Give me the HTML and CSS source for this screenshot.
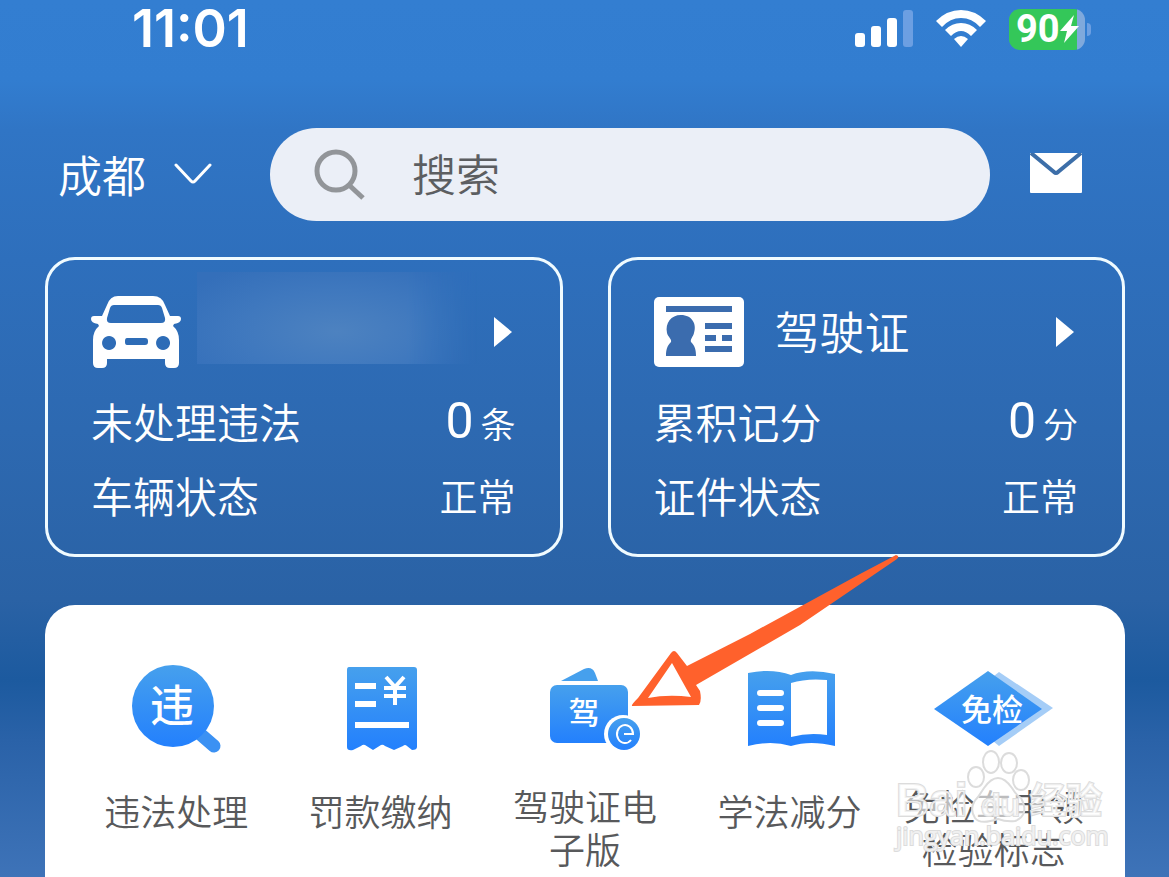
FILE: index.html
```html
<!DOCTYPE html>
<html lang="zh-CN">
<head>
<meta charset="utf-8">
<meta name="viewport" content="width=device-width, initial-scale=1">
<title>交管</title>
<link rel="stylesheet" href="styles.css">
</head>
<body>
<div class="page">
  <div class="status-bar">
    <time class="clock">11:01</time>
    <div class="status-icons">
      <svg class="signal" width="58" height="38" viewBox="0 0 58 38" aria-hidden="true">
        <g fill="#fff"><rect x="0" y="23" width="10" height="14" rx="3"/><rect x="16" y="16" width="10" height="21" rx="3"/><rect x="32" y="8" width="10" height="29" rx="3"/></g>
        <rect x="48" y="0" width="10" height="37" rx="3" fill="#6c9fe2"/>
      </svg>
      <svg class="wifi" width="50" height="38" viewBox="0 0 50 38" aria-hidden="true">
        <path fill="#fff" d="M0 11Q11 0 25 0T50 11L44 17Q36 8 25 8T6 17ZM9 20Q16 13 25 13T41 20L35 26Q30 21 25 21T15 26ZM18 29Q25 23 32 29L25 37Z"/>
      </svg>
      <div class="battery">
        <span class="battery-level">90</span>
        <svg width="19" height="28" viewBox="0 0 19 28" aria-hidden="true"><path fill="#fff" d="M14 0 0 16H7L4 28 19 11H11Z"/></svg>
      </div>
    </div>
  </div>

  <header class="header">
    <button class="city" type="button">成都
      <svg width="38" height="22" viewBox="0 0 38 22" aria-hidden="true"><path d="M2 2 17 18Q19 20 21 18L36 2" fill="none" stroke="#fff" stroke-width="3" stroke-linecap="round"/></svg>
    </button>
    <label class="search">
      <svg width="52" height="52" viewBox="0 0 52 52" aria-hidden="true"><g fill="none" stroke="#929599" stroke-width="5"><circle cx="22" cy="22" r="19"/><path d="M35 36 49 49"/></g></svg>
      <input type="search" placeholder="搜索" aria-label="搜索">
    </label>
    <button class="mail" type="button" aria-label="消息">
      <svg width="52" height="40" viewBox="0 0 52 40" aria-hidden="true"><rect width="52" height="40" rx="1" fill="#fff"/><path d="M1 0 24 19Q26 21 28 19L51 0" fill="none" stroke="#3c6ea8" stroke-width="4"/></svg>
    </button>
  </header>

  <section class="cards">
    <a class="card" href="#vehicle">
      <span class="card-head">
        <svg class="card-icon" width="90" height="72" viewBox="0 0 90 72" aria-hidden="true">
          <path fill="#fff" fill-rule="evenodd" d="M27 0H62Q71 0 74 9L79 20H87Q90 20 90 23 90 27 83 28L82 30Q88 35 88 44V67Q88 72 83 72H79Q74 72 74 67V63H16V67Q16 72 11 72H7Q2 72 2 67V44Q2 35 8 30L7 28Q0 27 0 23 0 20 3 20H11L16 9Q19 0 27 0ZM23 9Q20 9 19 12L16 22Q15 27 20 27H70Q75 27 74 22L71 12Q70 9 67 9ZM18 40a7 7 0 1 0 .1 0ZM72 40a7 7 0 1 0 .1 0ZM36 42Q34 42 34 45V46Q34 49 36 49H54Q57 49 57 46V45Q57 42 54 42Z"/>
        </svg>
        <span class="plate" aria-label="车牌号"></span>
        <svg class="go" width="18" height="30" viewBox="0 0 18 30" aria-hidden="true"><path d="M0 0 18 15 0 30Z" fill="#fff"/></svg>
      </span>
      <span class="row"><span>未处理违法</span><span class="count"><b>0</b>条</span></span>
      <span class="row"><span>车辆状态</span><span class="state">正常</span></span>
    </a>
    <a class="card" href="#license">
      <span class="card-head">
        <svg class="card-icon" width="90" height="70" viewBox="0 0 90 70" aria-hidden="true">
          <rect width="90" height="70" rx="5" fill="#fff"/>
          <g fill="#3b6cae"><path d="M12 9H78V15H12ZM51 26H78V32H51ZM51 38H62V44H51ZM68 38H78V44H68ZM51 49H78V55H51Z"/><path d="M27 18C38 18 43 27 40 36 39 40 36 42 37 45 41 49 42 53 42 59H12C12 53 13 49 17 45 18 42 14 40 13 36 11 26 17 18 27 18Z"/></g>
        </svg>
        <span class="card-title">驾驶证</span>
        <svg class="go" width="18" height="30" viewBox="0 0 18 30" aria-hidden="true"><path d="M0 0 18 15 0 30Z" fill="#fff"/></svg>
      </span>
      <span class="row"><span>累积记分</span><span class="count"><b>0</b>分</span></span>
      <span class="row"><span>证件状态</span><span class="state">正常</span></span>
    </a>
  </section>

  <main class="panel">
    <nav class="services">
      <a class="service" href="#violation">
        <svg width="120" height="96" viewBox="0 0 120 96" aria-hidden="true">
          <defs><linearGradient id="blue" x1="0" y1="0" x2="0" y2="1"><stop offset="0" stop-color="#46a0ed"/><stop offset="1" stop-color="#2380fd"/></linearGradient></defs>
          <path d="M83 73 98 86" stroke="#3b91f3" stroke-width="13" stroke-linecap="round"/>
          <circle cx="57" cy="46" r="41" fill="url(#blue)"/>
          <text x="56" y="62" class="glyph glyph-large">违</text>
        </svg>
        <span class="label">违法处理</span>
      </a>
      <a class="service" href="#fine">
        <svg width="120" height="96" viewBox="0 0 120 96" aria-hidden="true">
          <path fill="url(#blue)" d="M28 7H93Q96 7 96 10V87Q96 90 91 90L86 86Q84 84 82 86L73 90 64 86Q62 84 60 85L52 90 44 85Q42 84 40 86L32 90Q26 91 26 87V10Q26 7 28 7Z"/>
          <path fill="#fff" d="M34 23H55V29H34ZM34 41H55V47H34ZM34 62H88V68H34Z"/>
          <path fill="none" stroke="#fff" stroke-width="4" d="M65 17 74 27 83 17M63 28H85M63 36H85M74 26V45"/>
        </svg>
        <span class="label">罚款缴纳</span>
      </a>
      <a class="service" href="#elicense">
        <svg width="120" height="96" viewBox="0 0 120 96" aria-hidden="true">
          <path fill="#46a0ed" d="M36 21 59 9Q67 6 70 13L73 21Z"/>
          <rect x="25" y="25" width="78" height="58" rx="7" fill="url(#blue)"/>
          <text x="59" y="64" class="glyph">驾</text>
          <circle cx="98" cy="74" r="19" fill="#fff"/><circle cx="99" cy="74" r="16" fill="url(#blue)"/>
          <path d="M99 74H108A8 9 0 1 0 106 80" fill="none" stroke="#fff" stroke-width="2"/>
        </svg>
        <span class="label label-double">驾驶证电<br>子版</span>
      </a>
      <a class="service" href="#study">
        <svg width="120" height="96" viewBox="0 0 120 96" aria-hidden="true">
          <path fill="url(#blue)" fill-rule="evenodd" d="M19 13Q43 8 62 15 80 8 106 14V86Q81 80 62 86 42 80 19 86ZM62 23V77Q80 72 98 75V20Q78 18 62 23Z"/>
          <path d="M31 33H52M31 48H52M31 63H52" stroke="#fff" stroke-width="6" stroke-linecap="round"/>
        </svg>
        <span class="label">学法减分</span>
      </a>
      <a class="service" href="#exempt">
        <svg width="120" height="96" viewBox="0 0 120 96" aria-hidden="true">
          <path fill="#a5cdf7" d="M65 12 119 48 65 86 19 48Z"/>
          <path fill="url(#blue)" d="M54 11 108 49 54 86 0 49Z"/>
          <text x="58" y="61" class="glyph">免检</text>
        </svg>
        <span class="label label-double">免检车申领<br>检验标志</span>
      </a>
    </nav>

    <svg class="pointer" width="270" height="156" viewBox="0 0 270 156" aria-hidden="true">
      <path fill="#ff612c" fill-rule="evenodd" d="M266 4Q270 5 267 8L170 74 66 134 70 140Q72 150 69 154L2 155Q1 154 8 147L41 102Q44 98 47 102L57 115 120 83 230 23ZM42 112 18 147Q38 143 61 146Z"/>
    </svg>

    <svg class="watermark" width="216" height="106" viewBox="0 0 216 106" aria-hidden="true">
      <g class="mark">
        <text x="4" y="68" class="mark-big">Bai</text>
        <text x="138" y="66" class="mark-cjk">经验</text>
        <text x="4" y="97" class="mark-url">jingyan.baidu.com</text>
        <g fill="#fff" fill-opacity=".6"><ellipse cx="99" cy="14" rx="8" ry="11"/><ellipse cx="117" cy="15" rx="8" ry="10"/><ellipse cx="84" cy="29" rx="8" ry="10"/><ellipse cx="129" cy="32" rx="8" ry="10"/><path d="M92 40Q106 20 120 40 124 47 129 50 138 67 123 73 114 74 106 71 88 77 83 70 76 59 86 49Z"/></g>
        <text x="89" y="68" class="mark-mid">du</text>
      </g>
    </svg>
  </main>
</div>
</body>
</html>
```
FILE: styles.css
```css
* { box-sizing: border-box; }

body {
  margin: 0;
  font-family: "Noto Sans CJK SC", sans-serif;
  font-weight: 350;
  color: #fff;
}

button, input {
  font: inherit;
  color: inherit;
  border: 0;
  padding: 0;
  background: none;
}

a { color: inherit; text-decoration: none; }
svg { display: block; flex: none; }

.page {
  min-height: 100vh;
  display: flex;
  flex-direction: column;
  padding: 0 44px 0 45px;
  background: linear-gradient(#337ed1 0, #327dd0 80px, #3075c5 130px, #2e6fbc 260px, #2d69b1 430px, #2a62a5 600px, #1c5a9f 680px, #2a62a8 740px, #3e73b8 877px);
}

.status-bar {
  display: flex;
  justify-content: space-between;
  align-items: center;
  height: 58px;
  padding: 0 40px 0 87px;
}

.clock { font: 600 52px/58px Inter, sans-serif; }
.status-icons { display: flex; align-items: center; gap: 23px; }

.battery {
  position: relative;
  display: flex;
  align-items: center;
  width: 76px;
  height: 41px;
  padding-left: 7px;
  border-radius: 11px;
  background: linear-gradient(90deg, #34c759 68px, #7fa9dc 68px);
}

.battery::after {
  content: "";
  position: absolute;
  left: 78px;
  top: 14px;
  width: 4px;
  height: 13px;
  border-radius: 0 4px 4px 0;
  background: #6c9fe2;
}

.battery-level { font: 700 38px/41px Roboto, sans-serif; }

.header {
  display: flex;
  align-items: center;
  height: 93px;
  margin-top: 70px;
  padding: 0 43px 0 13px;
}

.city {
  display: flex;
  align-items: center;
  gap: 28px;
  width: 212px;
  padding-bottom: 2px;
  font-size: 44px;
  line-height: 64px;
}

.search {
  flex: 1;
  display: flex;
  align-items: center;
  gap: 46px;
  height: 93px;
  padding: 0 44px;
  border-radius: 47px;
  background: #ebeff7;
}

.search input {
  flex: 1;
  min-width: 0;
  padding-bottom: 4px;
  font-size: 44px;
  line-height: 64px;
  color: #5c5e61;
  outline: 0;
}

.search input::placeholder { color: #5c5e61; opacity: 1; }
.mail { margin-left: 40px; padding-bottom: 4px; }

.cards {
  display: grid;
  grid-template-columns: 1fr 1fr;
  gap: 45px;
  margin-top: 36px;
}

.card {
  display: flex;
  flex-direction: column;
  padding: 36px 44px 22px 43px;
  border: 3px solid #f0fbff;
  border-radius: 30px;
}

.card-head {
  display: flex;
  align-items: center;
  height: 72px;
  margin-bottom: 16px;
}

.card-title { margin-left: 31px; padding-bottom: 4px; font-size: 45px; }
.go { margin: 0 4px 0 auto; }

.plate {
  align-self: flex-end;
  width: 280px;
  height: 92px;
  margin: 0 0 4px 16px;
  background: radial-gradient(ellipse at 50% 65%, #4d82c0, #3f78be 50%, #346fba 90%);
  -webkit-mask-image: linear-gradient(90deg, #000 75%, transparent);
  mask-image: linear-gradient(90deg, #000 75%, transparent);
}

.row {
  display: flex;
  justify-content: space-between;
  height: 74px;
  font-size: 42px;
  line-height: 74px;
}

.count { font-size: 35px; }
.count b { margin-right: 7px; font: 400 50px/74px Roboto, sans-serif; }
.state { font-size: 38px; }

.panel {
  position: relative;
  flex: 1;
  margin-top: 48px;
  padding: 55px 29px 0;
  border-radius: 30px 30px 0 0;
  background: #fff;
}

.services {
  display: grid;
  grid-template-columns: repeat(5, 1fr);
}

.service {
  display: flex;
  flex-direction: column;
  align-items: center;
  gap: 28px;
  color: #58595b;
}

.label {
  font-size: 36px;
  line-height: 52px;
  text-align: center;
  white-space: nowrap;
}

.label-double { line-height: 43px; }

.glyph {
  fill: #fff;
  font-size: 31px;
  font-weight: 500;
  text-anchor: middle;
}

.glyph-large { font-size: 44px; }

.pointer {
  position: absolute;
  left: calc(50% + 45px);
  top: -54px;
}

.watermark {
  position: absolute;
  right: 17px;
  top: 143px;
}

.mark { stroke: #dcdcdc; stroke-width: 2px; }

.mark text {
  fill: #fff;
  fill-opacity: .6;
  paint-order: stroke;
  font-family: "Liberation Sans", sans-serif;
}

.mark .mark-big { font-size: 46px; font-weight: 700; }
.mark .mark-mid { font-size: 32px; font-weight: 700; }
.mark .mark-cjk { font-family: "Noto Sans CJK SC", sans-serif; font-size: 36px; font-weight: 700; }
.mark .mark-url { font-family: "Open Sans", sans-serif; font-size: 25px; font-weight: 400; }
```
